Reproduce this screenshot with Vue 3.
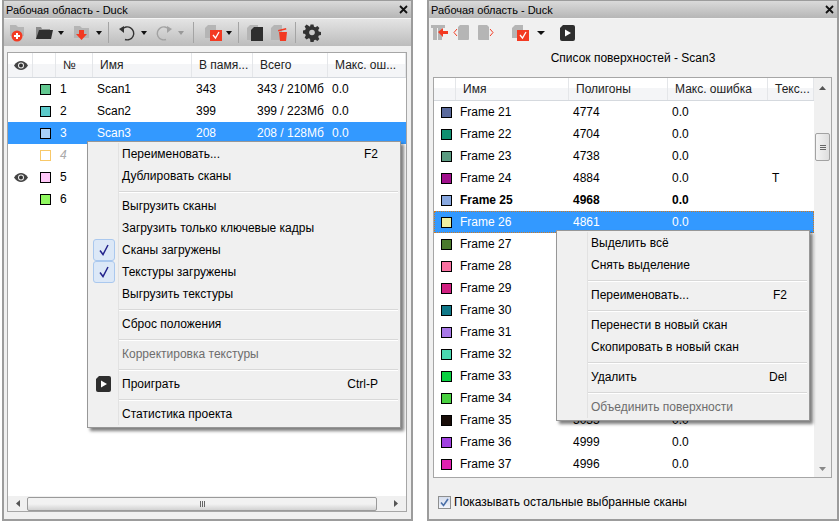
<template>
  <div class="page">
    <!-- left dock: scans -->
    <section class="panel left-panel">
      <div class="title">
        <span>Рабочая область - Duck</span>
        <svg class="close" width="9" height="9" viewBox="0 0 9 9"><path d="M1 1l7 7M8 1L1 8" stroke="#111" stroke-width="1.8" /></svg>
      </div>
      <div class="toolbar gradient">
        <svg class="ic ml5" width="18" height="18" viewBox="0 0 18 18">
          <path d="M1 1h6l2 2h6v9H1z" fill="#b5b5b5" />
          <circle cx="8" cy="12" r="5.5" fill="#f33a22" />
          <path d="M8 9v6M5 12h6" stroke="#fff" stroke-width="2" />
        </svg>
        <svg class="ic ml8" width="18" height="18" viewBox="0 0 18 18">
          <path d="M1 3h5l1 2h8v2H5L3 15H1z" fill="#8c8c8c" />
          <path d="M4 6h14l-2 9H1z" fill="#2e2e2e" />
        </svg>
        <i class="caret"></i>
        <svg class="ic ml9" width="18" height="18" viewBox="0 0 18 18">
          <path d="M1 2h6l2 2h7v10H1z" fill="#b5b5b5" />
          <path d="M6 6h5v4h3l-5.500 6L3 10h3z" fill="#f33a22" />
        </svg>
        <i class="caret"></i>
        <b class="sep"></b>
        <svg class="ic ml9" width="18" height="18" viewBox="0 0 18 18">
          <path d="M4 5.500A6.500 6.500 0 1 1 7 15.500" fill="none" stroke="#333" stroke-width="1.4" />
          <path d="M1 5l5-3v7z" fill="#333" />
        </svg>
        <i class="caret"></i>
        <svg class="ic ml8" width="18" height="18" viewBox="0 0 18 18">
          <path d="M14 5.500A6.500 6.500 0 1 0 11 15.500" fill="none" stroke="#a2a2a2" stroke-width="1.4" />
          <path d="M17 5l-5-3v7z" fill="#a2a2a2" />
        </svg>
        <i class="caret off"></i>
        <b class="sep ml9"></b>
        <svg class="ic ml10" width="18" height="18" viewBox="0 0 18 18">
          <path d="M4 1h8v13H1V4z" fill="#b5b5b5" />
          <rect x="6" y="6" width="12" height="11" fill="#f33a22" />
          <path d="M9 11l2.500 3L15 8" fill="none" stroke="#fff" stroke-width="1.300" />
        </svg>
        <i class="caret ml4"></i>
        <b class="sep"></b>
        <svg class="ic ml7" width="18" height="18" viewBox="0 0 18 18">
          <path d="M4 1h8v15H1V4z" fill="#b5b5b5" />
          <path d="M8 3h9v14H5V6z" fill="#2e2e2e" />
        </svg>
        <svg class="ic ml6" width="18" height="18" viewBox="0 0 18 18">
          <path d="M4 1h8v15H1V4z" fill="#b5b5b5" />
          <path d="M9 8h8l-1 9h-6zM8 6l8-2 .4 1.500-8 2z" fill="#f33a22" />
        </svg>
        <b class="sep ml7"></b>
        <svg class="ic ml7" width="18" height="18" viewBox="0 0 18 18">
          <path d="M7.500 1h3l.5 2.200 1.500.6 1.900-1.200 2 2-1.200 1.900.6 1.500 2.200.5v3l-2.200.5-.6 1.500 1.200 1.900-2 2-1.900-1.200-1.500.6-.5 2.200h-3L7 15.300l-1.500-.6-1.900 1.200-2-2 1.200-1.900-.6-1.500L0 10V7l2.200-.5.6-1.500-1.200-1.900 2-2 1.900 1.200L7 3.200z" transform="translate(0 -.5)" fill="#333" />
          <circle cx="9" cy="8.500" r="2.800" fill="#c8c8c8" />
        </svg>
      </div>
      <div class="table scans">
        <div class="head row-scan">
          <span class="hcell center"><svg width="14" height="9" viewBox="0 0 14 9"><use href="#eye-shape" /></svg></span>
          <span class="hcell"></span>
          <span class="hcell">№</span>
          <span class="hcell">Имя</span>
          <span class="hcell">В памя...</span>
          <span class="hcell">Всего</span>
          <span class="hcell">Макс. ош...</span>
        </div>
        <div class="rows">
          <div v-for="s in scans" :key="s.no" class="row row-scan" :class="{ selected: s.selected, dim: s.dim }">
            <span class="eye">
              <svg v-if="s.visible" width="14" height="9" viewBox="0 0 14 9"><use href="#eye-shape" /></svg>
            </span>
            <span class="swatch-cell"><i class="swatch" :style="{ background: s.color, borderColor: s.dim ? '#f8c868' : '#000' }"></i></span>
            <span class="cell">{{ s.no }}</span>
            <span class="cell">{{ s.name }}</span>
            <span class="cell">{{ s.mem }}</span>
            <span class="cell">{{ s.total }}</span>
            <span class="cell">{{ s.err }}</span>
          </div>
        </div>
        <div class="hscroll">
          <span class="arr">
            <svg width="4" height="7" viewBox="0 0 4 7"><path d="M4 0v7L0 3.500z" fill="#555" /></svg>
          </span>
          <div class="hthumb"><i></i><i></i><i></i></div>
          <span class="arr">
            <svg width="4" height="7" viewBox="0 0 4 7"><path d="M0 0v7l4-3.500z" fill="#555" /></svg>
          </span>
        </div>
        <div class="menu scan-menu">
          <template v-for="(m, i) in scanMenu" :key="i">
            <div v-if="m.sep" class="msep"></div>
            <div v-else class="mitem" :class="{ disabled: m.disabled }">
              <span class="gutter">
                <span v-if="m.checked" class="checkbox">
                  <svg width="10" height="12" viewBox="0 0 10 12"><path d="M1 6.500l3 4L9 1" fill="none" stroke="#24248c" stroke-width="1.500" /></svg>
                </span>
                <svg v-if="m.play" width="15" height="16" viewBox="0 0 15 16">
                  <path d="M3 0h10a2 2 0 0 1 2 2v12a2 2 0 0 1-2 2H2a2 2 0 0 1-2-2V3z" fill="#2e2e2e" />
                  <path d="M5 4.500l6 3.500-6 3.500z" fill="#fff" />
                </svg>
              </span>
              <span class="mlabel">{{ m.label }}</span>
              <span class="mkey">{{ m.key }}</span>
            </div>
          </template>
        </div>
      </div>
    </section>

    <!-- right dock: surfaces -->
    <section class="panel right-panel">
      <div class="title">
        <span>Рабочая область - Duck</span>
        <svg class="close" width="9" height="9" viewBox="0 0 9 9"><path d="M1 1l7 7M8 1L1 8" stroke="#111" stroke-width="1.8" /></svg>
      </div>
      <div class="toolbar">
        <svg class="ic ml1" width="18" height="18" viewBox="0 0 18 18">
          <path d="M1 1h14v3h-3v12H8V4H7v12H3V4H1z" fill="#b5b5b5" />
          <path d="M8 8l5-4v3h5v3h-5v3z" fill="#f33a22" />
        </svg>
        <svg class="ic ml5" width="18" height="18" viewBox="0 0 18 18">
          <path d="M7 1h8a1 1 0 0 1 1 1v13a1 1 0 0 1-1 1H5V3z" fill="#b5b5b5" />
          <path d="M4 5L1 8.500 4 12" fill="none" stroke="#f33a22" />
        </svg>
        <svg class="ic ml5" width="18" height="18" viewBox="0 0 18 18">
          <path d="M3 1h8l2 2v13H3a1 1 0 0 1-1-1V2a1 1 0 0 1 1-1z" fill="#b5b5b5" />
          <path d="M14 5l3 3.500-3 3.500" fill="none" stroke="#f33a22" />
        </svg>
        <svg class="ic ml17" width="18" height="18" viewBox="0 0 18 18">
          <path d="M4 1h8v13H1V4z" fill="#b5b5b5" />
          <rect x="6" y="6" width="12" height="11" fill="#f33a22" />
          <path d="M9 11l2.500 3L15 8" fill="none" stroke="#fff" stroke-width="1.300" />
        </svg>
        <i class="caret wide"></i>
        <svg class="ic ml15" width="15" height="16" viewBox="0 0 15 16">
          <path d="M3 0h10a2 2 0 0 1 2 2v12a2 2 0 0 1-2 2H2a2 2 0 0 1-2-2V3z" fill="#2e2e2e" />
          <path d="M5 4.500l6 3.500-6 3.500z" fill="#fff" />
        </svg>
      </div>
      <div class="subtitle">Список поверхностей - Scan3</div>
      <div class="table frames">
        <div class="frames-main">
          <div class="head row-frame">
            <span class="hcell"></span>
            <span class="hcell">Имя</span>
            <span class="hcell">Полигоны</span>
            <span class="hcell">Макс. ошибка</span>
            <span class="hcell">Текс...</span>
          </div>
          <div class="rows">
            <div v-for="f in frames" :key="f.name" class="row row-frame" :class="{ selected: f.selected, bold: f.bold }">
              <span class="swatch-cell"><i class="swatch" :style="{ background: f.color }"></i></span>
              <span class="cell">{{ f.name }}</span>
              <span class="cell">{{ f.poly }}</span>
              <span class="cell">{{ f.err }}</span>
              <span class="cell">{{ f.tex }}</span>
            </div>
          </div>
        </div>
        <div class="vscroll">
          <svg width="7" height="4" viewBox="0 0 7 4"><path d="M0 4h7L3.500 0z" fill="#555" /></svg>
          <div class="vthumb"><i></i><i></i><i></i></div>
          <svg class="down" width="7" height="4" viewBox="0 0 7 4"><path d="M0 0h7L3.500 4z" fill="#888" /></svg>
        </div>
        <div class="menu frame-menu">
          <template v-for="(m, i) in frameMenu" :key="i">
            <div v-if="m.sep" class="msep"></div>
            <div v-else class="mitem" :class="{ disabled: m.disabled }">
              <span class="gutter"></span>
              <span class="mlabel">{{ m.label }}</span>
              <span class="mkey">{{ m.key }}</span>
            </div>
          </template>
        </div>
      </div>
      <label class="option">
        <span class="tick">
          <svg width="9" height="9" viewBox="0 0 9 9"><path d="M1 4.500l2.500 3L8 1" fill="none" stroke="#4a6fa8" stroke-width="1.600" /></svg>
        </span>
        Показывать остальные выбранные сканы
      </label>
    </section>

    <svg class="defs" width="0" height="0">
      <g id="eye-shape">
        <path d="M0 4.500C2.500 1 4.500 0 7 0s4.500 1 7 4.500C11.500 8 9.500 9 7 9S2.500 8 0 4.500z" fill="#444" />
        <circle cx="7" cy="4.500" r="3" fill="#eee" />
        <circle cx="7" cy="4.500" r="2" fill="#333" />
      </g>
    </svg>
  </div>
</template>

<script setup>
const scans = [
  { no: '1', name: 'Scan1', mem: '343', total: '343 / 210Мб', err: '0.0', color: '#62c890' },
  { no: '2', name: 'Scan2', mem: '399', total: '399 / 223Мб', err: '0.0', color: '#5ccaca' },
  { no: '3', name: 'Scan3', mem: '208', total: '208 / 128Мб', err: '0.0', color: '#a8d0f8', selected: true },
  { no: '4', color: '#fff', dim: true },
  { no: '5', color: '#ffc8f8', visible: true },
  { no: '6', color: '#90f860' }
]

const scanMenu = [
  { label: 'Переименовать...', key: 'F2' },
  { label: 'Дублировать сканы' },
  { sep: true },
  { label: 'Выгрузить сканы' },
  { label: 'Загрузить только ключевые кадры' },
  { label: 'Сканы загружены', checked: true },
  { label: 'Текстуры загружены', checked: true },
  { label: 'Выгрузить текстуры' },
  { sep: true },
  { label: 'Сброс положения' },
  { sep: true },
  { label: 'Корректировка текстуры', disabled: true },
  { sep: true },
  { label: 'Проиграть', key: 'Ctrl-P', play: true },
  { sep: true },
  { label: 'Статистика проекта' }
]

const frameMenu = [
  { label: 'Выделить всё' },
  { label: 'Снять выделение' },
  { sep: true },
  { label: 'Переименовать...', key: 'F2' },
  { sep: true },
  { label: 'Перенести в новый скан' },
  { label: 'Скопировать в новый скан' },
  { sep: true },
  { label: 'Удалить', key: 'Del' },
  { sep: true },
  { label: 'Объединить поверхности', disabled: true }
]

const frames = [
  { name: 'Frame 21', poly: '4774', err: '0.0', color: '#5a6a9c' },
  { name: 'Frame 22', poly: '4704', err: '0.0', color: '#109070' },
  { name: 'Frame 23', poly: '4738', err: '0.0', color: '#5a9a80' },
  { name: 'Frame 24', poly: '4884', err: '0.0', tex: 'T', color: '#a0108c' },
  { name: 'Frame 25', poly: '4968', err: '0.0', color: '#88a8e0', bold: true },
  { name: 'Frame 26', poly: '4861', err: '0.0', color: '#f0f0a0', selected: true },
  { name: 'Frame 27', color: '#4a7a2c' },
  { name: 'Frame 28', color: '#f870a0' },
  { name: 'Frame 29', color: '#d02080' },
  { name: 'Frame 30', color: '#107888' },
  { name: 'Frame 31', color: '#a878e8' },
  { name: 'Frame 32', color: '#48d8b0' },
  { name: 'Frame 33', color: '#08d040' },
  { name: 'Frame 34', color: '#48d040' },
  { name: 'Frame 35', poly: '5035', err: '0.0', color: '#180c08' },
  { name: 'Frame 36', poly: '4999', err: '0.0', color: '#a040e0' },
  { name: 'Frame 37', poly: '4996', err: '0.0', color: '#e020b0' }
]
</script>

<style scoped>
.page {
  display: flex;
  gap: 14px;
  width: 840px;
  height: 521px;
  padding-left: 2px;
  box-sizing: border-box;
  background: #fff;
  font-family: "Liberation Sans", Arial, sans-serif;
  font-size: 12px;
  color: #000;
  overflow: hidden;
}

.defs {
  position: absolute;
}

.panel {
  display: flex;
  flex-direction: column;
  box-sizing: border-box;
  height: 521px;
  background: #f0f0f0;
  border: 2px solid #9c9c9c;
  border-top-width: 1px;
}

.left-panel {
  width: 411px;
}

.right-panel {
  width: 412px;
}

.title {
  display: flex;
  align-items: center;
  justify-content: space-between;
  flex: none;
  height: 17px;
  padding: 0 2px;
  font-size: 11px;
  background: linear-gradient(#dadada, #b6b6b6);
}

.close {
  margin-right: 1px;
}

.toolbar {
  display: flex;
  align-items: center;
  flex: none;
  height: 27px;
  border-top: 1px solid #f4f4f4;
}

.gradient {
  background: linear-gradient(#e4e4e4, #bcbcbc);
}

.ic {
  flex: none;
}

.caret {
  flex: none;
  width: 0;
  height: 0;
  margin-left: 5px;
  border: 3px solid transparent;
  border-top: 4px solid #111;
  border-bottom: 0;
}

.caret.off {
  border-top-color: #999;
}

.caret.wide {
  margin-left: 8px;
  border-width: 4px;
  border-bottom: 0;
}

.sep {
  flex: none;
  width: 1px;
  height: 21px;
  margin-left: 6px;
  background: #a4a4a4;
}

.ml1 { margin-left: 1px; }
.ml4 { margin-left: 4px; }
.ml5 { margin-left: 5px; }
.ml6 { margin-left: 6px; }
.ml7 { margin-left: 7px; }
.ml8 { margin-left: 8px; }
.ml9 { margin-left: 9px; }
.ml10 { margin-left: 10px; }
.ml15 { margin-left: 15px; }
.ml17 { margin-left: 17px; }

.table {
  position: relative;
  box-sizing: border-box;
  background: #fff;
  border: 1px solid #a6a6a6;
}

.scans {
  display: flex;
  flex-direction: column;
  height: 460px;
  margin: 6px 4px 0 3px;
}

.frames {
  display: flex;
  height: 401px;
  margin: 3px 5px 0 4px;
}

.frames-main {
  flex: 1;
  min-width: 0;
}

.head {
  height: 25px;
  background: linear-gradient(#fff 45%, #f4f5f7 45%);
  border-bottom: 1px solid #d5d9de;
  box-sizing: border-box;
}

.row-scan {
  display: grid;
  grid-template-columns: 24px 23px 37px 99px 61px 75px 1fr;
  padding-left: 1px;
}

.row-frame {
  display: grid;
  grid-template-columns: 21px 113px 99px 100px 1fr;
  padding-left: 1px;
}

.hcell {
  display: flex;
  align-items: center;
  padding-left: 7px;
  color: #222;
  border-right: 1px solid #e4e6e9;
  overflow: hidden;
  white-space: nowrap;
}

.hcell.center {
  justify-content: center;
  padding-left: 0;
}

.frames .head {
  height: 23px;
}

.row {
  height: 22px;
  align-items: center;
}

.row.selected {
  background: #3399ff;
  color: #fff;
}

.frames .row.selected {
  outline: 1px dotted #d07a20;
  outline-offset: -1px;
}

.row.dim .cell {
  color: #aaa;
  font-style: italic;
}

.row.bold {
  font-weight: 700;
}

.cell {
  padding-left: 4px;
  white-space: nowrap;
}

.eye {
  display: flex;
  align-items: center;
  justify-content: center;
}

.swatch-cell {
  display: flex;
  align-items: center;
  padding-left: 7px;
}

.frames .swatch-cell {
  padding-left: 6px;
}

.swatch {
  display: block;
  box-sizing: border-box;
  width: 11px;
  height: 11px;
  border: 1px solid #000;
}

.rows {
  flex: 1;
}

.hscroll {
  display: flex;
  align-items: center;
  flex: none;
  height: 15px;
  padding: 0 1px;
  background: #f0f0f0;
}

.arr {
  display: flex;
  align-items: center;
  justify-content: center;
  flex: none;
  width: 18px;
}

.hthumb {
  display: flex;
  align-items: center;
  justify-content: center;
  gap: 1px;
  flex: 1;
  height: 14px;
  margin-right: 10px;
  border: 1px solid #9a9a9a;
  border-radius: 2px;
  box-sizing: border-box;
  background: linear-gradient(#f2f2f2, #f2f2f2 50%, #d2d2d2);
}

.hthumb i {
  width: 1px;
  height: 6px;
  background: #666;
}

.vscroll {
  position: relative;
  display: flex;
  flex-direction: column;
  align-items: center;
  flex: none;
  width: 17px;
  box-sizing: border-box;
  padding-top: 8px;
  background: #f0f0f0;
}

.vthumb {
  display: flex;
  flex-direction: column;
  align-items: center;
  justify-content: center;
  gap: 1px;
  box-sizing: border-box;
  width: 15px;
  height: 28px;
  margin-top: 43px;
  border: 1px solid #a2a2a2;
  border-radius: 2px;
  background: linear-gradient(90deg, #f4f4f4, #dedede);
}

.vthumb i {
  width: 6px;
  height: 1px;
  background: #666;
}

.down {
  position: absolute;
  bottom: 6px;
}

.menu {
  position: absolute;
  z-index: 2;
  box-sizing: border-box;
  padding: 1px 2px 1px 1px;
  background: #f0f0f0;
  border: 1px solid #979797;
  box-shadow: 3px 3px 3px rgba(0, 0, 0, 0.5);
}

.scan-menu {
  left: 79px;
  top: 88px;
  width: 314px;
  height: 287px;
}

.frame-menu {
  left: 122px;
  top: 152px;
  width: 254px;
  height: 191px;
}

.mitem {
  display: flex;
  align-items: center;
  height: 22px;
}

.gutter {
  display: flex;
  align-items: center;
  justify-content: center;
  flex: none;
  box-sizing: border-box;
  width: 30px;
  height: 100%;
  border-right: 1px solid #e2e2e2;
}

.mlabel {
  flex: 1;
  padding-left: 3px;
  white-space: nowrap;
}

.mkey {
  padding-right: 20px;
}

.mitem.disabled {
  color: #6d6d6d;
}

.checkbox {
  display: flex;
  align-items: center;
  justify-content: center;
  box-sizing: border-box;
  width: 22px;
  height: 22px;
  background: #dce8f7;
  border: 1px solid #aac8ee;
  border-radius: 3px;
}

.msep {
  box-sizing: border-box;
  height: 8px;
  margin-left: 29px;
  border-left: 1px solid #e2e2e2;
}

.msep::before {
  content: "";
  display: block;
  position: relative;
  top: 4px;
  height: 1px;
  background: #d8d8d8;
  border-bottom: 1px solid #fff;
}

.subtitle {
  flex: none;
  padding-top: 5px;
  height: 28px;
  box-sizing: border-box;
  text-align: center;
}

.option {
  display: flex;
  align-items: center;
  gap: 3px;
  margin: 17px 0 0 9px;
}

.tick {
  display: flex;
  align-items: center;
  justify-content: center;
  box-sizing: border-box;
  width: 13px;
  height: 13px;
  background: linear-gradient(#d5dded, #f2f5fb);
  border: 1px solid #8e8f8f;
}
</style>
